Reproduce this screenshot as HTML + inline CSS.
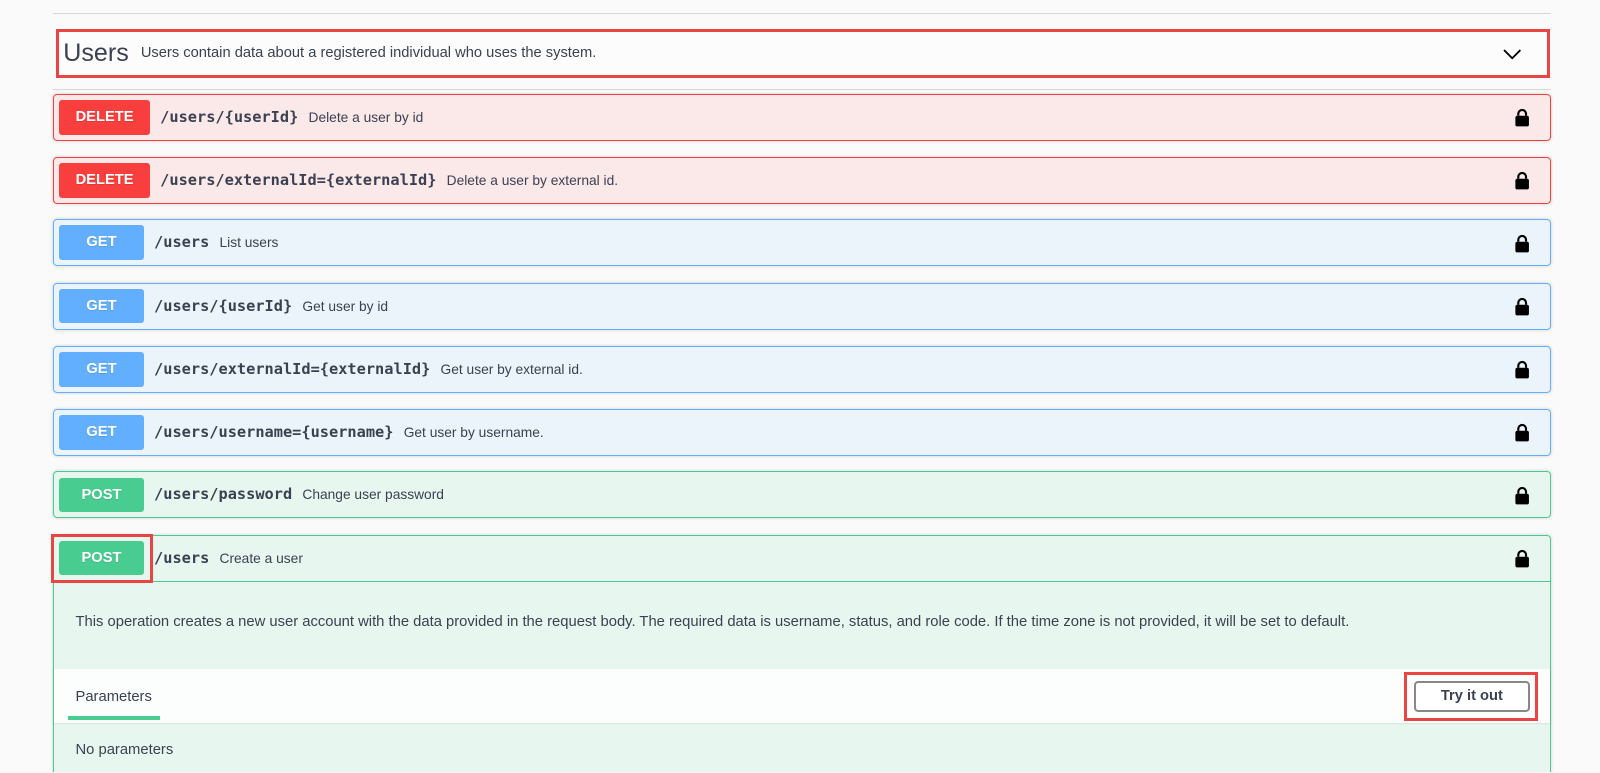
<!DOCTYPE html>
<html><head><meta charset="utf-8"><style>
*{box-sizing:border-box;margin:0;padding:0}
html,body{width:1600px;height:773px;background:#fafafa;overflow:hidden}
#w{position:relative;width:1568px;height:757px;overflow:hidden;zoom:1.0204;font-family:"Liberation Sans",sans-serif;color:#3b4151}
.abs{position:absolute}
.op{position:absolute;left:52px;width:1468px;height:46px;border:1px solid;border-radius:4px;box-shadow:0 0 3px rgba(0,0,0,.19)}
.del{background:#fbe8e8;border-color:#f93e3e}
.get{background:#ebf3fb;border-color:#61affe}
.post{background:#e8f6f0;border-color:#49cc90}
.m{position:absolute;left:5px;top:5px;height:34px;border-radius:3px;color:#fff;font-weight:bold;font-size:14.4px;line-height:34px;text-align:center;text-shadow:0 1px 0 rgba(0,0,0,.1)}
.del .m{background:#f93e3e;width:89px}
.get .m{background:#61affe;width:83px}
.post .m{background:#49cc90;width:83px}
.p{position:absolute;top:0;line-height:44px;font-family:"DejaVu Sans Mono","Liberation Mono",monospace;font-weight:bold;font-size:15px;color:#3b4151}
.p span{font-family:"Liberation Sans",sans-serif;font-weight:normal;font-size:13.5px;margin-left:10px}
</style></head><body><div id="w">
<div class="abs" style="left:52px;top:13px;width:1468px;height:1px;background:#d6d6d6"></div>
<div class="abs" style="left:52px;top:87px;width:1468px;height:1px;background:#d6d6d6"></div>
<div class="abs" style="left:55px;top:28px;width:1464px;height:48px;border:3px solid #e94545;background:#fcfcfc"></div>
<div class="abs" style="left:62px;top:36px;font-size:24.6px;line-height:32px">Users</div>
<div class="abs" style="left:138px;top:43px;font-size:14.4px;line-height:18px">Users contain data about a registered individual who uses the system.</div>
<svg class="abs" style="left:1472px;top:46px" width="20" height="14" viewBox="0 0 20 14"><path d="M2 3l8 8 8-8" fill="none" stroke="#000" stroke-width="1.8"/></svg>

<div class="op del" style="top:92px"><div class="m">DELETE</div><div class="p" style="left:104px">/users/{userId}<span>Delete a user by id</span></div></div>
<div class="op del" style="top:154px"><div class="m">DELETE</div><div class="p" style="left:104px">/users/externalId={externalId}<span>Delete a user by external id.</span></div></div>
<div class="op get" style="top:215px"><div class="m">GET</div><div class="p" style="left:98px">/users<span>List users</span></div></div>
<div class="op get" style="top:277px"><div class="m">GET</div><div class="p" style="left:98px">/users/{userId}<span>Get user by id</span></div></div>
<div class="op get" style="top:339px"><div class="m">GET</div><div class="p" style="left:98px">/users/externalId={externalId}<span>Get user by external id.</span></div></div>
<div class="op get" style="top:401px"><div class="m">GET</div><div class="p" style="left:98px">/users/username={username}<span>Get user by username.</span></div></div>
<div class="op post" style="top:462px"><div class="m">POST</div><div class="p" style="left:98px">/users/password<span>Change user password</span></div></div>
<div class="op post" style="top:524px;height:260px"><div class="m">POST</div><div class="p" style="left:98px">/users<span>Create a user</span></div>
<div class="abs" style="left:0;top:44px;width:1466px;height:1px;background:#49cc90"></div>
<div class="abs" style="left:21px;top:76px;font-size:14.5px;line-height:18px;white-space:nowrap">This operation creates a new user account with the data provided in the request body. The required data is username, status, and role code. If the time zone is not provided, it will be set to default.</div>
<div class="abs" style="left:0;top:131px;width:1466px;height:53px;background:rgba(255,255,255,.85);box-shadow:0 1px 2px rgba(0,0,0,.1)"></div>
<div class="abs" style="left:21px;top:149px;font-size:14.5px;line-height:18px">Parameters</div>
<div class="abs" style="left:14px;top:177px;width:90px;height:4px;background:#49cc90"></div>
<div class="abs" style="left:1333px;top:142px;width:113px;height:31px;border:2px solid #888;border-radius:4px;background:#fff;font-weight:bold;font-size:14.4px;line-height:27px;text-align:center">Try it out</div>
<div class="abs" style="left:21px;top:201px;font-size:14.5px;line-height:18px">No parameters</div>
</div>
<div class="abs" style="left:50px;top:523px;width:100px;height:48px;border:3px solid #e94545"></div>
<div class="abs" style="left:1376px;top:659px;width:131px;height:48px;border:3px solid #e94545"></div>
<svg width="0" height="0" style="position:absolute"><defs><symbol id="lk" viewBox="0 0 16 20"><path d="M4 8V6a4 4 0 018 0v2" fill="none" stroke="#000" stroke-width="2.2"/><rect x="1" y="8" width="14" height="11" rx="2" fill="#000"/></symbol></defs></svg>
<svg class="abs" style="left:1484px;top:106px" width="16" height="19"><use href="#lk"/></svg>
<svg class="abs" style="left:1484px;top:168px" width="16" height="19"><use href="#lk"/></svg>
<svg class="abs" style="left:1484px;top:229px" width="16" height="19"><use href="#lk"/></svg>
<svg class="abs" style="left:1484px;top:291px" width="16" height="19"><use href="#lk"/></svg>
<svg class="abs" style="left:1484px;top:353px" width="16" height="19"><use href="#lk"/></svg>
<svg class="abs" style="left:1484px;top:415px" width="16" height="19"><use href="#lk"/></svg>
<svg class="abs" style="left:1484px;top:476px" width="16" height="19"><use href="#lk"/></svg>
<svg class="abs" style="left:1484px;top:538px" width="16" height="19"><use href="#lk"/></svg>
</div></body></html>
